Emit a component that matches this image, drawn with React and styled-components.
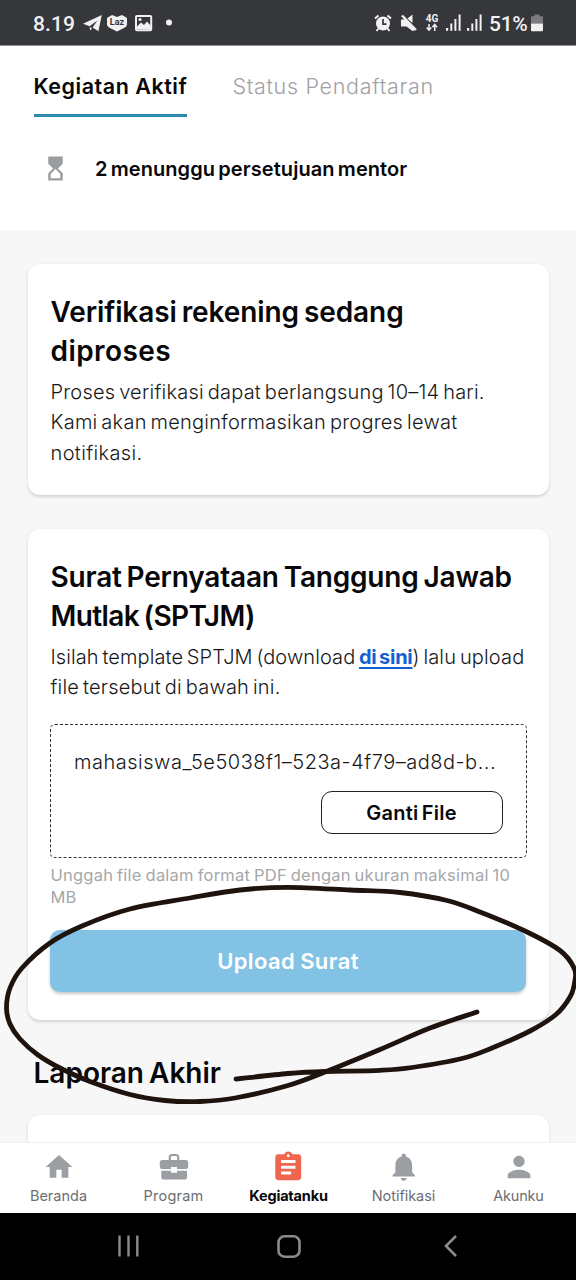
import React from "react";
import styled, { createGlobalStyle } from "styled-components";
import { MdHourglassTop, MdHome, MdAssignment, MdNotifications, MdPerson } from "react-icons/md";

const Global = createGlobalStyle`
  *, *::before, *::after { box-sizing: border-box; }
  body {
    margin: 0;
    background: #f7f7f7;
    font-family: Inter, "Liberation Sans", sans-serif;
    color: #08080a;
  }
  h2, p { margin: 0; }
  button { font-family: inherit; color: inherit; padding: 0; cursor: pointer; }
`;

const Screen = styled.div`
  position: relative;
  width: 576px;
  height: 1280px;
  overflow: hidden;
  display: flex;
  flex-direction: column;
  background: #f7f7f7;
`;

/* ---------- status bar ---------- */
const StatusBar = styled.header`
  flex: none;
  height: 46px;
  display: flex;
  align-items: center;
  justify-content: space-between;
  padding: 0 33px 0 33px;
  background: #36373b;
  border-bottom: 1px solid #8f9093;
  color: #f1f1f2;
  font-family: Roboto, "Liberation Sans", sans-serif;
`;
const StatusGroup = styled.div`
  display: flex;
  align-items: center;
  height: 46px;
`;
const StatusText = styled.span`
  font-size: 21px;
  line-height: 46px;
  padding-top: 2px;
  font-weight: 500;
  letter-spacing: ${(p) => p.$track || 0}px;
  margin-left: ${(p) => p.$ml || 0}px;
`;
const Glyph = styled.svg`
  display: block;
  flex: none;
  overflow: visible;
  margin-left: ${(p) => p.$ml || 0}px;
`;

/* ---------- top section ---------- */
const Top = styled.section`
  flex: none;
  height: 184px;
  padding: 26px 33.5px 0;
  background: #fff;
`;
const Tabs = styled.nav`
  display: flex;
  gap: 45px;
`;
const Tab = styled.div`
  height: 45px;
  font-size: 21.5px;
  line-height: 28px;
  font-weight: ${(p) => (p.$active ? 600 : 350)};
  letter-spacing: ${(p) => (p.$active ? 0.53 : 0.7)}px;
  color: ${(p) => (p.$active ? "#08080a" : "#a0a2a5")};
  border-bottom: 3px solid ${(p) => (p.$active ? "#2b8ab0" : "transparent")};
`;
const Pending = styled.div`
  display: flex;
  align-items: center;
  gap: 25px;
  height: 30px;
  margin-top: 36.5px;
  padding-left: 7.5px;
  font-size: 20px;
  font-weight: 600;
  color: #08080a;
  svg { color: #9a9da0; }
`;

/* ---------- content ---------- */
const Content = styled.main`
  flex: 1;
  min-height: 0;
  overflow: hidden;
  padding: 34px 27px 0 28px;
`;
const Card = styled.section`
  height: ${(p) => p.$h}px;
  padding: 28.5px 22.5px 0;
  margin-bottom: 34px;
  background: #fff;
  border-radius: 12px;
  box-shadow: 0 1.5px 3px rgba(0, 0, 0, 0.15);
`;
const Title = styled.h2`
  font-size: 28px;
  line-height: 39px;
  font-weight: 600;
`;
const Body = styled.p`
  margin-top: 6.3px;
  font-size: 20px;
  line-height: 30.4px;
  font-weight: 350;
  color: #17181a;
`;
const Line = styled.span`
  display: ${(p) => (p.$inline ? "inline" : "block")};
  white-space: pre;
  letter-spacing: ${(p) => p.$t || 0}px;
  word-spacing: ${(p) => (p.$ws === undefined ? -2 : p.$ws)}px;
`;
const Link = styled.a`
  color: #1560d0;
  font-weight: 700;
  letter-spacing: -0.25px;
  word-spacing: -2px;
  text-decoration: underline;
  text-decoration-thickness: 2px;
  text-underline-offset: 3px;
`;
const FileBox = styled.div`
  display: flex;
  flex-direction: column;
  align-items: flex-end;
  height: 134px;
  margin: 21.500px 0 0 -0.500px;
  padding: 21.5px 23px 0;
  border: 1px dashed #333;
  border-radius: 5px;
`;
const FileName = styled.div`
  width: 100%;
  font-size: 20px;
  line-height: 30px;
  font-weight: 350;
  color: #17181a;
`;
const OutlineButton = styled.button`
  width: 182px;
  height: 43px;
  margin-top: 14.5px;
  background: #fff;
  border: 1px solid #222;
  border-radius: 11px;
  font-size: 20px;
  font-weight: 600;
`;
const Hint = styled.p`
  margin-top: 6px;
  font-size: 16.5px;
  line-height: 22px;
  color: #a5a7aa;
`;
const PrimaryButton = styled.button`
  display: block;
  width: 476px;
  height: 61.5px;
  margin: 22.300px 0 0 -0.500px;
  border: 0;
  border-radius: 10px;
  background: #82c2e5;
  box-shadow: 0 1.500px 3px rgba(0, 0, 0, 0.22);
  color: #fff;
  font-size: 22px;
  font-weight: 600;
`;
const SectionTitle = styled(Title)`
  padding-left: 5.5px;
  margin: 0 0 22px;
`;

/* ---------- bottom bars ---------- */
const NavBar = styled.nav`
  flex: none;
  display: grid;
  grid-template-columns: repeat(5, 1fr);
  height: 71px;
  padding: 7px 0 0 1px;
  background: #fff;
  border-top: 1px solid #f0f0f0;
`;
const NavItem = styled.div`
  display: flex;
  flex-direction: column;
  align-items: center;
  gap: 1.5px;
  font-size: 14.5px;
  line-height: 20px;
  font-weight: ${(p) => (p.$active ? 700 : 400)};
  letter-spacing: ${(p) => p.$t}px;
  color: ${(p) => (p.$active ? "#08080a" : "#6b6e73")};
`;
const NavIcon = styled.div`
  display: flex;
  align-items: center;
  justify-content: center;
  height: 34px;
  color: ${(p) => (p.$active ? "#f0654e" : "#9b9ea3")};
  svg { display: block; }
`;
const SystemKeys = styled.footer`
  flex: none;
  display: flex;
  align-items: center;
  height: 67px;
  padding: 0 0 1px 118px;
  background: #000;
  svg + svg { margin-left: 138px; }
  svg + svg + svg { margin-left: 143px; }
`;

const Scribble = styled.svg`
  position: absolute;
  left: 0;
  top: 870px;
  pointer-events: none;
`;

const Briefcase = () => (
  <svg width="34" height="34" viewBox="0 0 34 34" fill="currentColor">
    <path d="M12.8 11V7.4q0-2.4 2.4-2.4h3.6q2.4 0 2.4 2.4V11" fill="none" stroke="currentColor" strokeWidth="2.2" />
    <path d="M5.300 10H28.700q2.500 0 2.500 2.500V16.600q0 2.500-2.500 2.500H20V17H14V19.100H5.300q-2.500 0-2.500-2.500V12.500q0-2.500 2.500-2.500Z" />
    <path d="M4.300 20.700H14V22.700H20V20.700H30V27q0 2.600-2.600 2.600H6.900Q4.300 29.600 4.300 27Z" />
  </svg>
);

const Signal = ({ ml }) => (
  <Glyph $ml={ml} width="15" height="17" viewBox="0 0 15 17" fill="#f1f1f2">
    <rect x="0" y="14" width="2.200" height="2.800" />
    <rect x="4.300" y="9.500" width="2" height="7.300" />
    <rect x="8.400" y="5" width="2" height="11.800" />
    <rect x="12.600" y="0.500" width="2" height="16.300" />
  </Glyph>
);

const navItems = [
  { label: "Beranda", icon: <MdHome size={32} />, t: 0 },
  { label: "Program", icon: <Briefcase />, t: 0.2 },
  { label: "Kegiatanku", icon: <MdAssignment size={34.5} />, t: -0.18, active: true },
  { label: "Notifikasi", icon: <MdNotifications size={33.5} />, t: -0.05 },
  { label: "Akunku", icon: <MdPerson size={34} />, t: -0.2 },
];

const strokePoints = [
  [236, 1079], [288, 1073.5], [325, 1071.5], [380, 1070.3], [412, 1067.5], [462, 1058.5], [492, 1048],
  [530, 1031], [556, 1014.5], [570, 997], [574.5, 983], [574.5, 969], [560, 950.5], [525, 931], [480, 912], [447, 900.5],
  [400, 892.5], [350, 890], [288, 887.3], [240, 890], [190, 898], [130, 909], [82, 926], [50, 943],
  [22, 968], [10, 988], [6.5, 1008], [10, 1024], [20, 1039], [38, 1055], [60, 1068], [90, 1081.500], [130, 1094.500],
  [165, 1100.5], [200, 1101.5], [235, 1098], [288, 1085.5], [330, 1070], [380, 1049.5], [430, 1028], [477, 1012],
];

function smoothPath(points) {
  let d = `M${points[0][0]} ${points[0][1] - 870}`;
  for (let i = 0; i < points.length - 1; i++) {
    const p0 = points[Math.max(0, i - 1)];
    const p1 = points[i];
    const p2 = points[i + 1];
    const p3 = points[Math.min(points.length - 1, i + 2)];
    const c = [
      p1[0] + (p2[0] - p0[0]) / 6, p1[1] + (p2[1] - p0[1]) / 6 - 870,
      p2[0] - (p3[0] - p1[0]) / 6, p2[1] - (p3[1] - p1[1]) / 6 - 870,
      p2[0], p2[1] - 870,
    ];
    d += `C${c.map((n) => n.toFixed(1)).join(" ")}`;
  }
  return d;
}

export default function App() {
  return (
    <Screen>
      <Global />
      <StatusBar>
        <StatusGroup>
          <StatusText $track={0.1}>8.19</StatusText>
          <Glyph $ml={8} width="19" height="18" viewBox="0 0 19 18" fill="#f1f1f2">
            <path d="M0 9.800 18.800 1 15.400 17.300 9.600 13.600 14.400 6.400 6.600 12.200Z" />
            <path d="M6.600 12.800 9 14.400 7.300 16.400Z" />
          </Glyph>
          <Glyph $ml={5} width="20" height="18" viewBox="0 0 20 18">
            <path d="M5 1 10 3 15 1 20 4V11Q19.500 13 17 14L10 17.500 3 14Q.5 13 0 11V4Z" fill="#f1f1f2" />
            <text x="10" y="10.700" textAnchor="middle" fontFamily="Roboto" fontSize="9" fontWeight="700" fill="#36373b">Laz</text>
          </Glyph>
          <Glyph $ml={7.5} width="17" height="18" viewBox="0 0 17 18">
            <rect x="1" y="2" width="15.200" height="14.200" rx="1" fill="none" stroke="#f1f1f2" strokeWidth="2" />
            <path d="M2 15V12.500L6 8.500 9 11 12 7.500 16 12V15.500Z" fill="#f1f1f2" />
            <circle cx="5" cy="5.500" r="1.500" fill="#f1f1f2" />
          </Glyph>
          <Glyph $ml={14} width="6" height="8" viewBox="0 0 6 8">
            <circle cx="3" cy="3.500" r="3" fill="#f1f1f2" />
          </Glyph>
        </StatusGroup>
        <StatusGroup>
          <Glyph width="18" height="18" viewBox="0 0 18 18">
            <circle cx="9" cy="9.500" r="7" fill="#f1f1f2" />
            <path d="M1 4.500 4.500 1.500M17 4.500 13.500 1.500M4.500 14.500 2.500 17M13.500 14.500 15.500 17" stroke="#f1f1f2" strokeWidth="2" />
            <path d="M9 5V10.200H12.500" fill="none" stroke="#36373b" strokeWidth="1.700" />
          </Glyph>
          <Glyph $ml={8.5} width="16" height="18" viewBox="0 0 16 18">
            <path d="M0 5.500H4L13.500 15V16.500L11.500 17 5.500 12.500H0Z" fill="#f1f1f2" />
            <path d="M6.500 4.500 11.500 .5V9Z" fill="#f1f1f2" />
            <path d="M1 1.500 15 16" stroke="#f1f1f2" strokeWidth="2.400" />
          </Glyph>
          <Glyph $ml={8.5} width="14" height="18" viewBox="0 0 14 18">
            <text x="7" y="8" textAnchor="middle" fontFamily="Roboto" fontSize="10" fontWeight="700" fill="#f1f1f2">4G</text>
            <path d="M4 10V16M1.700 13.500 4 16.200 6.300 13.500M9.700 17V11M7.400 13.200 9.700 10.500 12 13.200" fill="none" stroke="#f1f1f2" strokeWidth="1.500" />
          </Glyph>
          <Signal ml={6.5} />
          <Signal ml={6} />
          <StatusText $ml={7.5} $track={-0.3}>51%</StatusText>
          <Glyph $ml={3.5} width="12" height="18" viewBox="0 0 12 18">
            <path d="M0 3Q0 2.300.8 2.300H3.500V.5H8.500V2.300H11.200Q12 2.300 12 3V9.500H0Z" fill="#7b7c80" />
            <path d="M0 9.500H12V16.500Q12 17.300 11.200 17.300H.8Q0 17.300 0 16.500Z" fill="#f1f1f2" />
          </Glyph>
        </StatusGroup>
      </StatusBar>

      <Top>
        <Tabs>
          <Tab $active>Kegiatan Aktif</Tab>
          <Tab>Status Pendaftaran</Tab>
        </Tabs>
        <Pending>
          <MdHourglassTop size={29} />
          <Line $t={0.08}>2 menunggu persetujuan mentor</Line>
        </Pending>
      </Top>

      <Content>
        <Card $h={231}>
          <Title>
            <Line $t={-0.09}>Verifikasi rekening sedang</Line>
            <Line $t={0.42}>diproses</Line>
          </Title>
          <Body>
            <Line $t={0.22}>Proses verifikasi dapat berlangsung 10–14 hari.</Line>
            <Line $t={0.24}>Kami akan menginformasikan progres lewat</Line>
            <Line $t={0.37}>notifikasi.</Line>
          </Body>
        </Card>

        <Card $h={491}>
          <Title>
            <Line $t={-0.19}>Surat Pernyataan Tanggung Jawab</Line>
            <Line $t={-0.6}>Mutlak (SPTJM)</Line>
          </Title>
          <Body>
            <Line $inline $t={0.09}>{"Isilah template SPTJM (download "}</Line>
            <Link>di sini</Link>
            <Line $inline $t={0.15}>) lalu upload</Line>
            <Line $t={0.21}>file tersebut di bawah ini.</Line>
          </Body>
          <FileBox>
            <FileName>
              <Line $t={0.51}>mahasiswa_5e5038f1–523a-4f79–ad8d-b...</Line>
            </FileName>
            <OutlineButton>
              <Line $t={0.24}>Ganti File</Line>
            </OutlineButton>
          </FileBox>
          <Hint>
            <Line $t={0.23} $ws={-1}>Unggah file dalam format PDF dengan ukuran maksimal 10</Line>
            <Line>MB</Line>
          </Hint>
          <PrimaryButton>
            <Line $t={0.4} $ws={-1}>Upload Surat</Line>
          </PrimaryButton>
        </Card>

        <SectionTitle>
          <Line $t={0}>Laporan Akhir</Line>
        </SectionTitle>
        <Card $h={120} />
      </Content>

      <NavBar>
        {navItems.map((item) => (
          <NavItem key={item.label} $active={item.active} $t={item.t}>
            <NavIcon $active={item.active}>{item.icon}</NavIcon>
            {item.label}
          </NavItem>
        ))}
      </NavBar>

      <SystemKeys>
        <svg width="21" height="22" viewBox="0 0 21 22" stroke="#8b8b8b" strokeWidth="2.400">
          <path d="M1.500 .5V21.500M10.500 .5V21.500M19.300 .5V21.500" />
        </svg>
        <svg width="24" height="23" viewBox="0 0 24 23" fill="none" stroke="#8b8b8b" strokeWidth="2.600">
          <rect x="1.500" y="1.300" width="21" height="20.400" rx="6" />
        </svg>
        <svg width="13" height="22" viewBox="0 0 13 22" fill="none" stroke="#8b8b8b" strokeWidth="2.600">
          <path d="M12 1 2 11 12 21" />
        </svg>
      </SystemKeys>

      <Scribble width="576" height="250" viewBox="0 0 576 250">
        <path d={smoothPath(strokePoints)} fill="none" stroke="#1f130e" strokeWidth="4.800" strokeLinecap="round" strokeLinejoin="round" />
      </Scribble>
    </Screen>
  );
}
